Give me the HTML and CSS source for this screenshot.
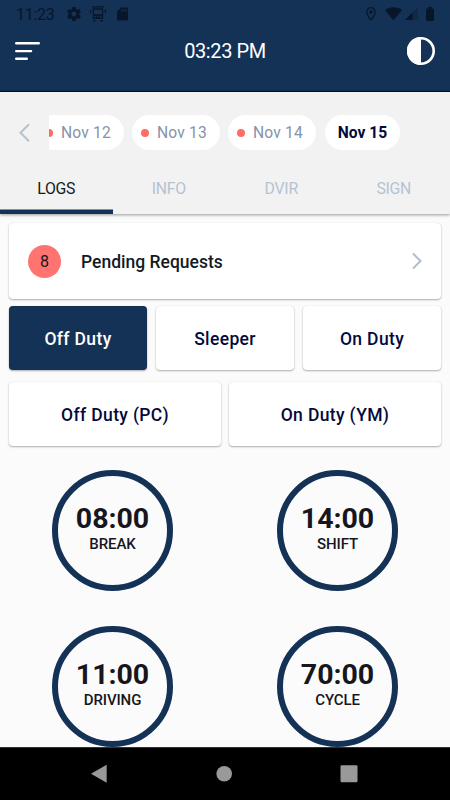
FILE: index.html
```html
<!DOCTYPE html>
<html lang="en">
<head>
<meta charset="utf-8">
<title>Driver Logs</title>
<link rel="stylesheet" href="styles.css">
</head>
<body>
<div class="screen">
  <header class="header">
    <div class="status">
      <span class="clock">11:23</span>
      <svg class="s-gear" width="14" height="14" viewBox="2 2 20 20"><path d="M19.43 12.98c.04-.32.07-.64.07-.98s-.03-.66-.07-.98l2.11-1.65c.19-.15.24-.42.12-.64l-2-3.46c-.12-.22-.39-.3-.61-.22l-2.49 1c-.52-.4-1.08-.73-1.69-.98l-.38-2.65A.49.49 0 0 0 14 2h-4c-.25 0-.46.18-.49.42l-.38 2.65c-.61.25-1.17.59-1.69.98l-2.49-1c-.23-.09-.49 0-.61.22l-2 3.46c-.13.22-.07.49.12.64l2.11 1.65c-.04.32-.07.65-.07.98s.03.66.07.98l-2.11 1.65c-.19.15-.24.42-.12.64l2 3.46c.12.22.39.3.61.22l2.49-1c.52.4 1.08.73 1.69.98l.38 2.65c.03.24.24.42.49.42h4c.25 0 .46-.18.49-.42l.38-2.65c.61-.25 1.17-.59 1.69-.98l2.49 1c.23.09.49 0 .61-.22l2-3.46c.12-.22.07-.49-.12-.64l-2.11-1.65zM12 15.5c-1.93 0-3.500-1.570-3.500-3.500s1.570-3.500 3.500-3.500 3.500 1.570 3.500 3.500-1.570 3.500-3.500 3.500z"/></svg>
      <svg class="s-truck" width="16" height="16" viewBox="0 0 16 16"><path fill-rule="evenodd" d="M2.200.3h11.600v1.200H2.200zM2.800 2.300h10.400v10.700h-10.400zM4 3.700v4.500h8V3.700zM4.200 10v1.500h1.800v-1.500zM10 10v1.500h1.800v-1.500zM7 10.300v1h2v-1zM0 4.300h2v1H1v2H0zM16 4.300h-2v1h1v2h1zM3.300 14h2v1.700h-2zM10.700 14h2v1.700h-2z"/></svg>
      <svg class="s-sd" width="11" height="14" viewBox="0 0 12 14"><path fill-rule="evenodd" d="M4.300 0H10.500Q12 0 12 1.500V12.500Q12 14 10.500 14H1.500Q0 14 0 12.500V4.300ZM4.300 1.800V4.200H5.500V1.800ZM6.700 1.800V4.200H7.900V1.800ZM9.100 1.800V4.200H10.300V1.800Z"/></svg>
      <span class="grow"></span>
      <svg class="s-pin" width="10" height="14" viewBox="0 0 10 14"><path d="M5 .7A4.250 4.250 0 0 0 .75 5C.75 8 5 12.900 5 12.900S9.250 8 9.250 5A4.250 4.250 0 0 0 5 .7Z" fill="none" stroke="#081629" stroke-width="1.200"/><circle cx="5" cy="5" r="1.800"/></svg>
      <svg class="s-wifi" width="17" height="14" viewBox="0 0 17 14"><path d="M0 2.900C5-.6 12-.6 17 2.900L8.500 13.500Z"/></svg>
      <svg class="s-cell" width="13" height="13" viewBox="0 0 13 13"><path d="M13 0V13H0Z" opacity=".3"/><path d="M7.500 5.500V13H0Z"/></svg>
      <svg class="s-battery" width="8" height="14" viewBox="0 0 8 14"><path d="M2 0h4v1.500h1q1 0 1 1V13q0 1-1 1H1q-1 0-1-1V2.500q0-1 1-1h1z"/></svg>
    </div>
    <div class="appbar">
      <svg width="26" height="20" viewBox="0 0 26 20" stroke="#fff" stroke-width="2.400" stroke-linecap="round"><path d="M1.200 2.300H23.800M1.200 10.100H16.100M1.200 17.800H11.800"/></svg>
      <h1 class="title">03:23 PM</h1>
      <svg width="28" height="28" viewBox="0 0 28 28"><circle cx="14" cy="14" r="12.700" fill="none" stroke="#fff" stroke-width="2.600"/><path d="M14 0A14 14 0 0 0 14 28Z" fill="#fff"/></svg>
    </div>
  </header>

  <section class="panel">
    <div class="dates">
      <svg class="back" width="12" height="20" viewBox="0 0 12 20"><path d="M10 1.200L1.500 9.700L10 18.200" fill="none" stroke="#b5c2d2" stroke-width="2"/></svg>
      <div class="strip">
        <div class="chip first"><i class="dot"></i>Nov 12</div>
        <div class="chip"><i class="dot"></i>Nov 13</div>
        <div class="chip"><i class="dot"></i>Nov 14</div>
        <div class="chip current">Nov 15</div>
      </div>
    </div>
    <nav class="tabs">
      <div class="tab active">LOGS</div>
      <div class="tab">INFO</div>
      <div class="tab">DVIR</div>
      <div class="tab">SIGN</div>
    </nav>
  </section>

  <main class="content">
    <div class="card pending">
      <span class="count">8</span>
      <span class="label">Pending Requests</span>
      <svg width="12" height="18" viewBox="0 0 12 18"><path d="M2 1.500L9.500 9L2 16.500" fill="none" stroke="#b0bdcd" stroke-width="2"/></svg>
    </div>
    <div class="row three">
      <div class="card button selected">Off Duty</div>
      <div class="card button">Sleeper</div>
      <div class="card button">On Duty</div>
    </div>
    <div class="row two">
      <div class="card button">Off Duty (PC)</div>
      <div class="card button">On Duty (YM)</div>
    </div>
    <div class="timers">
      <div class="timer"><b>08:00</b><span>BREAK</span></div>
      <div class="timer"><b>14:00</b><span>SHIFT</span></div>
      <div class="timer"><b>11:00</b><span>DRIVING</span></div>
      <div class="timer"><b>70:00</b><span>CYCLE</span></div>
    </div>
  </main>

  <footer class="navbar">
    <svg width="16" height="18" viewBox="0 0 16 18"><path d="M0 8.700L15.700-.3V17.700Z"/></svg>
    <svg width="16" height="16" viewBox="0 0 16 16"><circle cx="8.200" cy="7.800" r="7.800"/></svg>
    <svg width="18" height="18" viewBox="0 0 18 18"><rect x=".5" y=".3" width="17" height="17" rx="1.200"/></svg>
  </footer>
</div>
</body>
</html>
```
FILE: styles.css
```css
* { box-sizing: border-box; }

body {
  margin: 0;
  font-family: Roboto, "Liberation Sans", sans-serif;
  background: #fbfbfb;
}

svg { display: block; flex: none; }

.screen {
  width: 450px;
  height: 800px;
  display: flex;
  flex-direction: column;
  overflow: hidden;
}

.header {
  height: 92px;
  flex: none;
  background: #143156;
  border-bottom: 1px solid #02083c;
}

.status {
  height: 27px;
  display: flex;
  align-items: center;
  padding: 0 16px;
  color: #081629;
  fill: #081629;
}

.clock { width: 51px; padding-top: 1px; font-size: 16px; line-height: 27px; letter-spacing: -.3px; }
.s-truck { margin-left: 9px; }
.s-sd { margin-left: 11px; }
.grow { flex: 1; }
.s-pin { margin-right: 9px; }
.s-wifi { margin-right: 3px; }
.s-cell { margin-right: 8px; }

.appbar {
  height: 48px;
  display: flex;
  align-items: center;
  justify-content: space-between;
  padding: 0 15px;
}

.title {
  margin: 0 0 0 2px;
  font-size: 20px;
  font-weight: 400;
  line-height: 24px;
  letter-spacing: -.4px;
  color: #fff;
}

.panel {
  height: 122px;
  flex: none;
  background: #f2f2f2;
  box-shadow: 0 1px 3px rgba(0, 0, 0, .4);
  padding-top: 23px;
}

.dates { display: flex; align-items: center; height: 35px; }
.back { margin: 0 18px 0 19px; }
.strip { display: flex; gap: 8px; overflow: hidden; }

.chip {
  width: 88px;
  height: 35px;
  border-radius: 18px;
  background: #fff;
  display: flex;
  align-items: center;
  padding-left: 8.500px;
  font-size: 15.600px;
  letter-spacing: .2px;
  color: #8594a8;
}

.chip.first { margin-left: -13px; }

.chip.current {
  width: 75px;
  margin-left: 1px;
  padding: 0;
  justify-content: center;
  font-weight: 700;
  letter-spacing: 0;
  color: #030a3c;
}

.dot {
  width: 8px;
  height: 8px;
  margin-right: 8.500px;
  border-radius: 50%;
  background: #ff6b68;
}

.tabs { display: flex; margin-top: 13px; height: 51px; }

.tab {
  flex: 1;
  text-align: center;
  font-size: 15.800px;
  line-height: 51px;
  letter-spacing: -.25px;
  color: #b5c2d2;
}

.tab.active {
  color: #121a24;
  box-shadow: inset 0 -4.500px #143156;
}

.content { flex: 1; padding: 9px 9px 0; }

.card {
  background: #fff;
  border-radius: 4px;
  box-shadow: 0 1px 2px rgba(0, 0, 0, .3), 0 0 1px rgba(0, 0, 0, .12);
}

.pending {
  height: 76px;
  display: flex;
  align-items: center;
  padding: 0 18px 0 19px;
}

.count {
  width: 33px;
  height: 33px;
  border-radius: 50%;
  background: #ff7370;
  text-align: center;
  font-size: 16px;
  line-height: 34px;
  color: #16161c;
}

.label {
  flex: 1;
  margin-left: 20px;
  padding-top: 2px;
  font-size: 17.500px;
  font-weight: 500;
  color: #121a24;
}

.row { display: grid; }
.three { grid-template-columns: repeat(3, 1fr); gap: 9px; margin-top: 7px; }
.two { grid-template-columns: repeat(2, 1fr); gap: 8px; margin-top: 12px; }

.button {
  height: 64px;
  text-align: center;
  font-size: 17.500px;
  font-weight: 500;
  line-height: 66px;
  letter-spacing: .35px;
  color: #030a3c;
}

.button.selected { background: #143156; color: #fff; }

.timers {
  display: grid;
  grid-template-columns: repeat(2, 225px);
  justify-items: center;
  row-gap: 35px;
  margin: 24px -9px 0;
}

.timer {
  width: 121px;
  height: 121px;
  border: 6px solid #143156;
  border-radius: 50%;
  display: flex;
  flex-direction: column;
  align-items: center;
  padding-top: 26px;
  color: #16161c;
}

.timer b { font-size: 28.500px; line-height: 34px; font-weight: 700; }
.timer span { margin-top: -1px; font-size: 15px; line-height: 18px; font-weight: 500; letter-spacing: -.1px; }

.navbar {
  height: 53px;
  flex: none;
  background: #000;
  border-top: 1px solid #333;
  display: flex;
  align-items: center;
  justify-content: space-between;
  padding: 0 92px 0 91px;
  fill: #999;
}
```
